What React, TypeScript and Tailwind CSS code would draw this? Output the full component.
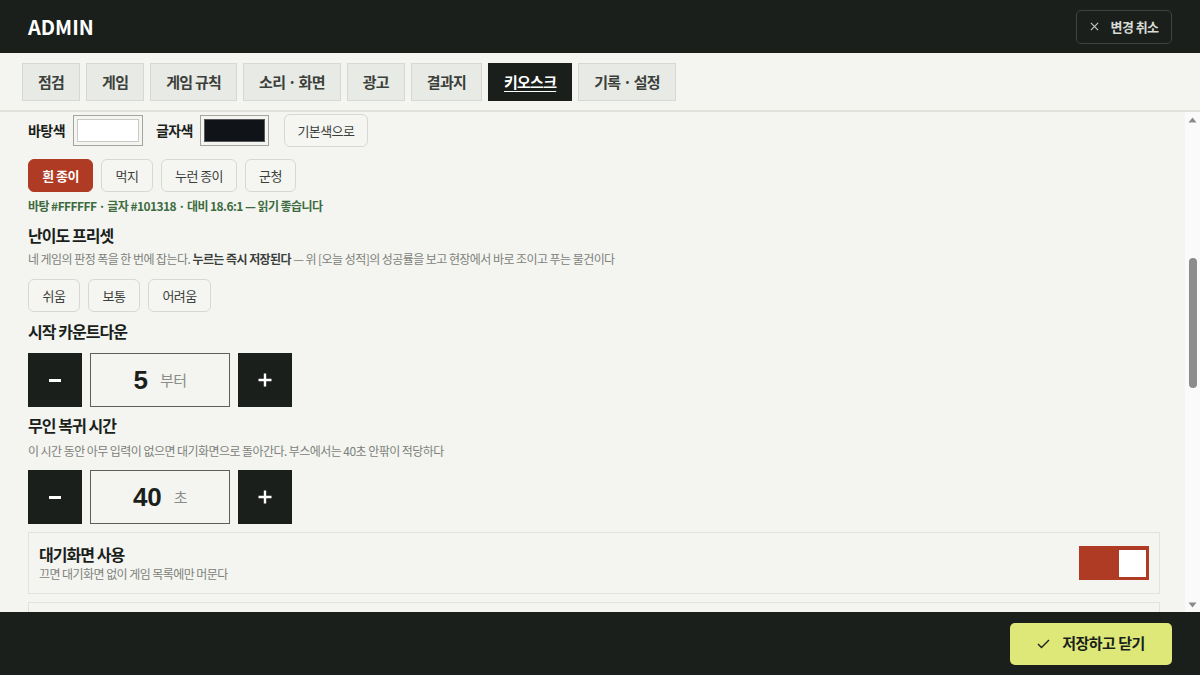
import React, { useEffect, useRef } from "react";

const KR = { fontFamily: '"Noto Sans CJK KR", "Noto Sans", sans-serif' };

function Tab({ label, active }: { label: string; active?: boolean }) {
  return (
    <div
      className={
        "h-[38px] flex items-center px-[15px] text-[15px] font-bold border tracking-[-0.05em] " +
        (active
          ? "bg-[#1b1f1c] border-[#1b1f1c] text-white underline underline-offset-[3px] decoration-1"
          : "bg-[#e8eae5] border-[#d6d9d2] text-[#3b403b]")
      }
    >
      {label}
    </div>
  );
}

function Btn({ label, active, w }: { label: string; active?: boolean; w?: string }) {
  return (
    <div
      className={
        "h-[33px] flex items-center justify-center rounded-[6px] border text-[13px] " +
        (w ? w + " " : "px-4 ") +
        (active
          ? "bg-[#b03b25] border-[#b03b25] text-white font-bold"
          : "bg-[#f5f6f2] border-[#d6d9d2] text-[#3b403b]")
      }
    >
      {label}
    </div>
  );
}

function Stepper({ value, unit }: { value: string; unit: string }) {
  return (
    <div className="flex gap-2 items-stretch h-[54px]">
      <div className="w-[54px] bg-[#1b1f1c] flex items-center justify-center">
        <div className="w-[12px] h-[3px] bg-white" />
      </div>
      <div className="w-[140px] border-[1.5px] border-[#5c5f5a] flex items-center justify-center gap-3">
        <span className="text-[26px] font-bold text-[#1b1f1c] tracking-normal" style={{ fontFamily: '"Liberation Sans", Arial, sans-serif' }}>
          {value}
        </span>
        <span className="text-[15px] text-[#8a8d87]">{unit}</span>
      </div>
      <div className="w-[54px] bg-[#1b1f1c] flex items-center justify-center text-white">
        <svg width="16" height="16" viewBox="0 0 16 16">
          <path d="M8 1.5v13M1.5 8h13" stroke="white" strokeWidth="2.4" />
        </svg>
      </div>
    </div>
  );
}

function Toggle({ on }: { on: boolean }) {
  return (
    <div className={"w-[70px] h-[34px] pt-[4px] pb-[3px] px-[3px] flex " + (on ? "bg-[#b03b25] justify-end" : "bg-[#c9ccc5] justify-start")}>
      <div className="w-[27px] h-[27px] bg-white" />
    </div>
  );
}

function ToggleCard({ title, desc, on }: { title: string; desc: string; on: boolean }) {
  return (
    <div className="border border-[#e0e2dc] bg-[#f4f5f1] h-[62px] flex items-center justify-between pl-[10px] pr-[10px]">
      <div className="flex flex-col">
        <span className="text-[16px] font-bold text-[#1b1f1c] leading-[22px] tracking-[-0.06em]">{title}</span>
        <span className="text-[12px] text-[#7d817a] leading-[18px]">{desc}</span>
      </div>
      <Toggle on={on} />
    </div>
  );
}

function Heading({ children, className }: { children: React.ReactNode; className?: string }) {
  return <div className={"text-[16px] font-bold text-[#1b1f1c] leading-[24px] tracking-[-0.06em] " + (className || "")}>{children}</div>;
}

function Desc({ children, className }: { children: React.ReactNode; className?: string }) {
  return <div className={"text-[12px] text-[#7d817a] leading-[18px] " + (className || "")}>{children}</div>;
}

function FakeScrollbar() {
  return (
    <div className="w-[15px] shrink-0 bg-[#fafafa] flex flex-col items-center">
      <div className="h-[15px] flex items-center justify-center">
        <svg width="9" height="6" viewBox="0 0 9 6">
          <path d="M4.5 0.5L8.5 5.5H0.5Z" fill="#8a8a8a" />
        </svg>
      </div>
      <div className="flex-1 w-full flex flex-col items-center pt-[131px]">
        <div className="w-[8px] h-[130px] rounded-[4px] bg-[#8c8c8c]" />
      </div>
      <div className="h-[15px] flex items-center justify-center">
        <svg width="9" height="6" viewBox="0 0 9 6">
          <path d="M0.5 0.5H8.5L4.5 5.5Z" fill="#8a8a8a" />
        </svg>
      </div>
    </div>
  );
}

export default function App() {
  const scrollRef = useRef<HTMLDivElement>(null);
  const anchorRef = useRef<HTMLDivElement>(null);

  useEffect(() => {
    if (scrollRef.current && anchorRef.current) {
      scrollRef.current.scrollTop = anchorRef.current.offsetTop - 2;
    }
  }, []);

  return (
    <div className="w-[1200px] h-[675px] flex flex-col bg-[#f4f5f1] overflow-hidden tracking-[-0.035em]" style={KR}>
      <header className="h-[53px] shrink-0 bg-[#1b1f1c] flex items-center justify-between pl-[28px] pr-[28px]">
        <div className="text-[20px] font-bold text-white tracking-normal">ADMIN</div>
        <div className="h-[34px] w-[96px] flex items-center justify-center gap-3 rounded-[5px] border border-[#3d433e] text-[#d9dcd6] text-[13px] font-bold">
          <svg width="9" height="9" viewBox="0 0 10 10">
            <path d="M1 1l8 8M9 1l-8 8" stroke="#c9ccc6" strokeWidth="1.2" />
          </svg>
          <span>변경 취소</span>
        </div>
      </header>

      <nav className="h-[59px] shrink-0 flex items-start gap-[6px] pl-[22px] pt-[10px] border-b-2 border-[#dfe1db]">
        <Tab label="점검" />
        <Tab label="게임" />
        <Tab label="게임 규칙" />
        <Tab label="소리 · 화면" />
        <Tab label="광고" />
        <Tab label="결과지" />
        <Tab label="키오스크" active />
        <Tab label="기록 · 설정" />
      </nav>

      <div className="flex-1 flex min-h-0">
        <div ref={scrollRef} className="relative flex-1 overflow-hidden">
          <div className="pl-[28px] pr-[25px] pt-5 pb-8 flex flex-col">
            {/* earlier content (scrolled above) */}
            <ToggleCard title="키오스크 모드" desc="켜면 관리자 화면 밖으로 나갈 수 없다" on={true} />
            <Heading className="mt-5">대기화면 문구</Heading>
            <Desc className="mt-1">대기화면 가운데에 크게 나오는 한 줄이다</Desc>
            <div className="mt-3 h-[44px] border-[1.5px] border-[#5c5f5a] bg-white flex items-center px-3 text-[15px] text-[#1b1f1c]">
              화면을 눌러 시작하세요
            </div>
            <Heading className="mt-5">글자 크기</Heading>
            <Desc className="mt-1">멀리서도 읽히도록 키오스크 글자를 키운다</Desc>
            <div className="mt-3 flex gap-2">
              <Btn label="보통" />
              <Btn label="크게" active />
              <Btn label="아주 크게" />
            </div>
            <Heading className="mt-5">커서 숨기기</Heading>
            <Desc className="mt-1">터치 화면에서는 마우스 커서를 숨겨 둔다</Desc>
            <div className="mt-3 flex gap-2">
              <Btn label="숨김" active />
              <Btn label="보임" />
            </div>
            <Heading className="mt-5">화면 색</Heading>
            <Desc className="mt-1">부스 조명에 맞춰 바탕과 글자 색을 고른다</Desc>

            {/* visible content */}
            <div ref={anchorRef} className="mt-3 flex items-center h-[33px]">
              <span className="text-[14px] font-bold text-[#1b1f1c]">바탕색</span>
              <div className="ml-[8px] w-[70px] h-[31px] border border-[#a3a5a0] p-[3px] bg-[#f4f5f1]">
                <div className="w-full h-full bg-white border border-[#c9cbc6]" />
              </div>
              <span className="ml-[13px] text-[14px] font-bold text-[#1b1f1c]">글자색</span>
              <div className="ml-[7px] w-[69px] h-[31px] border border-[#a3a5a0] p-[3px] bg-[#f4f5f1]">
                <div className="w-full h-full bg-[#101318] border border-[#55585a]" />
              </div>
              <div className="ml-[15px] h-[33px] w-[84px] flex items-center justify-center rounded-[6px] border border-[#d6d9d2] bg-[#f5f6f2] text-[13px] text-[#3b403b]">
                기본색으로
              </div>
            </div>
            <div className="mt-3 flex gap-2">
              <Btn label="흰 종이" active w="w-[65px]" />
              <Btn label="먹지" w="w-[52px]" />
              <Btn label="누런 종이" w="w-[76px]" />
              <Btn label="군청" w="w-[51px]" />
            </div>
            <div className="mt-[5px] text-[12px] font-bold text-[#3d6b40] leading-[18px]">
              바탕 #FFFFFF · 글자 #101318 · 대비 18.6:1 — 읽기 좋습니다
            </div>

            <Heading className="mt-2">난이도 프리셋</Heading>
            <Desc className="mt-[3px]">
              네 게임의 판정 폭을 한 번에 잡는다. <b className="text-[#3b403b]">누르는 즉시 저장된다</b> — 위 [오늘 성적]의 성공률을 보고 현장에서 바로 조이고 푸는 물건이다
            </Desc>
            <div className="mt-[11px] flex gap-2">
              <Btn label="쉬움" w="w-[52px]" />
              <Btn label="보통" w="w-[52px]" />
              <Btn label="어려움" w="w-[63px]" />
            </div>

            <Heading className="mt-[7px]">시작 카운트다운</Heading>
            <div className="mt-[10px]">
              <Stepper value="5" unit="부터" />
            </div>

            <Heading className="mt-[6px]">무인 복귀 시간</Heading>
            <Desc className="mt-[5px]">이 시간 동안 아무 입력이 없으면 대기화면으로 돌아간다. 부스에서는 40초 안팎이 적당하다</Desc>
            <div className="mt-[10px]">
              <Stepper value="40" unit="초" />
            </div>

            <div className="mt-2 flex flex-col gap-2">
              <ToggleCard title="대기화면 사용" desc="끄면 대기화면 없이 게임 목록에만 머문다" on={true} />
              <ToggleCard title="효과음" desc="버튼을 누를 때 짧은 소리를 낸다" on={true} />
              <ToggleCard title="배경 음악" desc="대기화면에서 배경 음악을 반복 재생한다" on={false} />
              <ToggleCard title="결과지 자동 인쇄" desc="게임이 끝나면 결과지를 바로 뽑는다" on={false} />
            </div>

            <Heading className="mt-5">관리자 진입</Heading>
            <Desc className="mt-1">화면 왼쪽 위 모서리를 길게 누르면 비밀번호 창이 뜬다</Desc>
            <div className="mt-3 flex gap-2">
              <Btn label="3초" />
              <Btn label="5초" active />
              <Btn label="10초" />
            </div>
            <Heading className="mt-5">화면 밝기</Heading>
            <Desc className="mt-1">밝은 부스에서는 높게, 어두운 곳에서는 낮게 둔다</Desc>
            <div className="mt-3">
              <Stepper value="80" unit="%" />
            </div>
            <div className="mt-4 flex flex-col gap-2">
              <ToggleCard title="화면 꺼짐 방지" desc="켜 두면 절전 모드로 들어가지 않는다" on={true} />
              <ToggleCard title="오류 시 자동 재시작" desc="문제가 생기면 대기화면부터 다시 띄운다" on={true} />
            </div>
          </div>
        </div>
        <FakeScrollbar />
      </div>

      <footer className="h-[63px] shrink-0 bg-[#1b1f1c] flex items-center justify-end pr-[28px]">
        <div className="h-[42px] w-[162px] rounded-[5px] bg-[#dde879] flex items-center justify-center gap-3 text-[15px] font-bold text-[#1b1f1c]">
          <svg width="13" height="10" viewBox="0 0 13 10">
            <path d="M1 5l3.5 3.5L12 1" stroke="#1b1f1c" strokeWidth="1.4" fill="none" />
          </svg>
          <span>저장하고 닫기</span>
        </div>
      </footer>
    </div>
  );
}
